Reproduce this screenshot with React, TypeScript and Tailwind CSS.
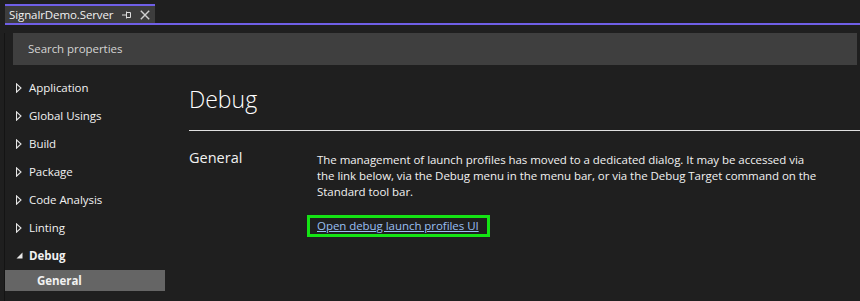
import React from "react";

const Tri = () => (
  <svg width="6" height="10" viewBox="0 0 6 10" className="shrink-0">
    <path d="M0.5 0.8 L5 5 L0.5 9.2 Z" fill="none" stroke="#e6e6e6" strokeWidth="1.1" />
  </svg>
);

const TriDown = () => (
  <svg width="7" height="7" viewBox="0 0 7 7" className="shrink-0">
    <path d="M6.5 0.5 L6.5 6.5 L0.5 6.5 Z" fill="#e8e8e8" />
  </svg>
);

const items = ["Application", "Global Usings", "Build", "Package", "Code Analysis", "Linting"];

export default function App() {
  return (
    <div className="w-[860px] h-[301px] bg-[#1f1f1f] overflow-hidden text-[#f1f1f1] font-['Segoe_UI','Open_Sans',sans-serif]">
      {/* tab strip */}
      <div className="pl-[5px] pt-[4px]">
        <div className="flex h-[19px] w-[150px] items-center border-t-2 border-[#6f5fe6] bg-[#3d3d3d]">
          <span className="ml-[4px] text-[11.5px] tracking-[-0.1px] leading-none text-[#f1f1f1]">SignalrDemo.Server</span>
          <svg width="10" height="8" viewBox="0 0 10 8" className="ml-[9px] mt-[1px]">
            <path d="M0 4 H4 M4.5 0.5 V7.5 M4.5 1.5 H8.5 V6.5 H4.5" fill="none" stroke="#dcdcdc" strokeWidth="1" />
          </svg>
          <svg width="10" height="10" viewBox="0 0 10 10" className="ml-[8px]">
            <path d="M0.8 0.8 L9.2 9.2 M9.2 0.8 L0.8 9.2" stroke="#d0d0d0" strokeWidth="1.4" />
          </svg>
        </div>
        <div className="h-[2px] bg-[#6f5fe6]" />
      </div>
      {/* panel */}
      <div className="ml-[4px] h-[276px] border-l border-[#141414]">
        <div className="ml-[8px] mr-[3px] mt-[8px] flex h-[32px] items-center bg-[#3f3f3f] pl-[15px] text-[11.5px] tracking-[-0.05px] text-[#d4d4d4]">
          Search properties
        </div>
        <div className="mt-[9px] flex">
          <nav className="w-[160px] shrink-0 text-[11.5px] tracking-[-0.05px]">
            {items.map((it) => (
              <div key={it} className="flex h-[28px] items-center">
                <div className="ml-[11px] flex w-[13px]">
                  <Tri />
                </div>
                <span>{it}</span>
              </div>
            ))}
            <div className="flex h-[28px] items-center">
              <div className="ml-[11px] flex w-[13px] pb-[1px]">
                <TriDown />
              </div>
              <span className="font-bold">Debug</span>
            </div>
            <div className="flex h-[21px] items-center bg-[#656565] pl-[32px] font-bold">General</div>
          </nav>
          <main className="flex-1 pl-[24px] pt-[9px]">
            <div className="border-b border-[#e0e0e0] pb-[15px]">
              <h1 className="text-[23px] font-light leading-[32px] text-white">Debug</h1>
            </div>
            <div className="mt-[21px] flex">
              <div className="-mt-[2px] w-[128px] shrink-0 text-[14.5px] leading-[16px]">General</div>
              <div className="w-[502px] text-[11.5px] tracking-[-0.05px] leading-[16px]">
                <p>
                  The management of launch profiles has moved to a dedicated dialog. It may be accessed via the link
                  below, via the Debug menu in the menu bar, or via the Debug Target command on the Standard tool bar.
                </p>
                <div className="-ml-[10px] mt-[15px] inline-block border-[3px] border-[#14e314] pl-[7px] pr-[8px]">
                  <a className="leading-[16px] text-[#99bff2] underline">Open debug launch profiles UI</a>
                </div>
              </div>
            </div>
          </main>
        </div>
      </div>
    </div>
  );
}
